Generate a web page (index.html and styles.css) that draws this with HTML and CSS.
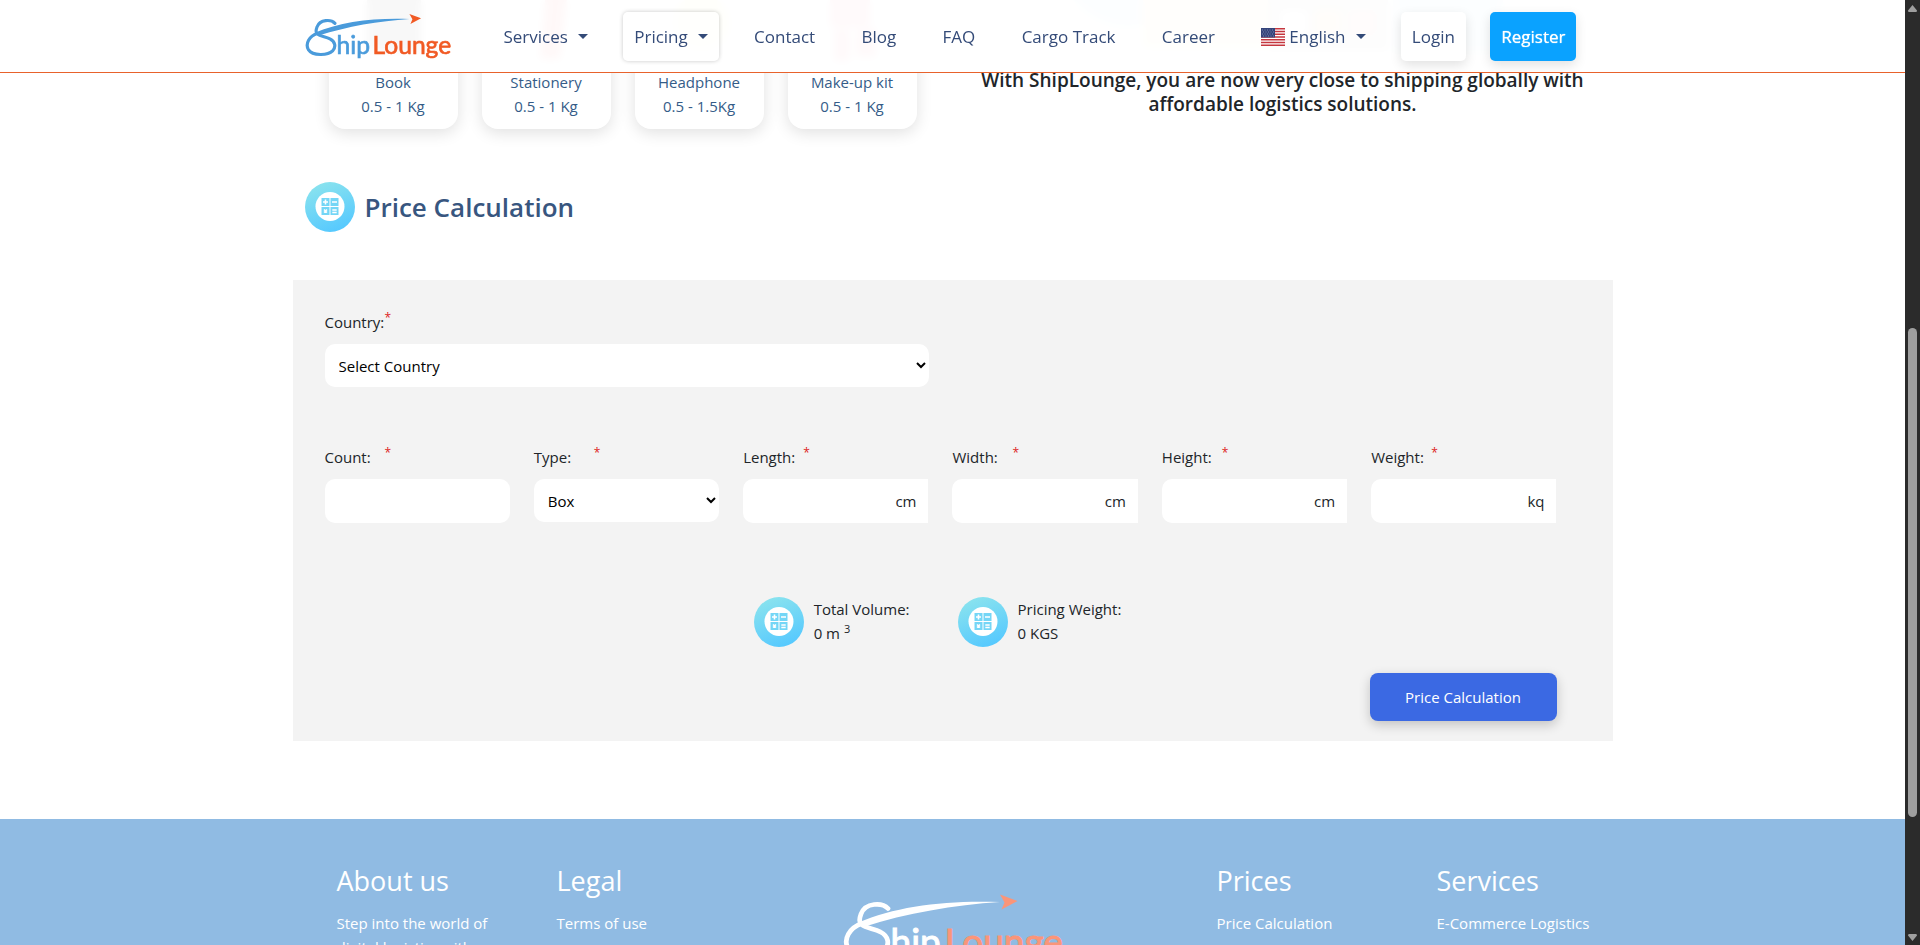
FILE: index.html
```html
<!DOCTYPE html>
<html lang="en">
<head>
<meta charset="utf-8">
<title>ShipLounge - Price Calculation</title>
<link rel="stylesheet" href="styles.css">
</head>
<body>
<svg width="0" height="0" class="defs" aria-hidden="true">
  <defs>
    <linearGradient id="sky" x1="0.3" y1="0" x2="0.7" y2="1"><stop offset="0" stop-color="#8ae3ee"/><stop offset="1" stop-color="#54c8ff"/></linearGradient>
    <symbol id="calc" viewBox="0 0 50 50">
      <circle cx="25" cy="25" r="25" fill="url(#sky)"/>
      <circle cx="25" cy="24.500" r="14.500" fill="#fff"/>
      <path fill="#74d6f6" d="M16.500 16h8v8h-8zM25.500 16h8v8h-8zM16.500 25h8v8h-8zM25.500 25h8v8h-8z"/>
      <path stroke="#fff" stroke-width="1.600" fill="none" d="M18 20h5M20.500 17.500v5M27 20h5M19 27.500l3 3M22 27.500l-3 3M27.300 28h4.400M27.300 30.500h4.400"/>
    </symbol>
    <symbol id="logo" viewBox="43 36 448 142">
      <g class="logo-ship">
        <path fill="none" stroke="currentColor" stroke-width="9.500" stroke-linecap="round" stroke-linejoin="round" d="M133 67C122 55 88 54 79 78C76 86 75 95 80 99C90 107 106 107 118 114C134 122 137 138 126 150C112 164 66 166 53 146C43 128 56 106 80 97"/>
        <path fill="currentColor" d="M74 95C150 62 250 50 357 54C265 60 170 76 84 104Z"/>
      </g>
      <path class="logo-lounge" fill="currentColor" d="M357 39L392 52L360 69L366 55Z"/>
      <text class="logo-ship logo-word" x="138" y="159">hip</text>
      <text class="logo-lounge logo-word" x="246" y="159">Lounge</text>
    </symbol>
  </defs>
</svg>
<div class="window">
  <div class="viewport">
    <header class="header">
      <div class="container header-row">
        <a class="brand" href="#" aria-label="ShipLounge"><svg class="logo"><use href="#logo"/></svg></a>
        <nav class="nav">
          <a class="caret" href="#">Services</a>
          <a class="caret active" href="#">Pricing</a>
          <a href="#">Contact</a>
          <a href="#">Blog</a>
          <a href="#">FAQ</a>
          <a href="#">Cargo Track</a>
          <a href="#">Career</a>
          <a class="caret" href="#"><svg class="flag" viewBox="0 0 24 18"><path fill="#fff" d="M0 0h24v18H0z"/><path stroke="#c5373f" stroke-width="1.400" d="M0 .7h24M0 3.450h24M0 6.200h24M0 8.950h24M0 11.700h24M0 14.450h24M0 17.200h24"/><path fill="#35447a" d="M0 0h14v9.500H0z"/><path stroke="#8f9bc0" stroke-width=".8" stroke-dasharray="1 1.500" d="M1 2h12M2 4h11M1 6h12M2 8h11"/></svg>English</a>
          <a class="login" href="#">Login</a>
          <a class="register" href="#">Register</a>
        </nav>
      </div>
    </header>
    <main>
      <section class="container intro">
        <div class="products">
          <article class="product"><svg viewBox="0 0 80 90"><rect x="14" y="20" width="54" height="56" rx="6" fill="#999"/></svg><span>Book</span><span>0.5 - 1 Kg</span></article>
          <article class="product"><svg viewBox="0 0 80 90"><path fill="#f8a0a0" d="M34 84l6-70h22l-8 70z"/></svg><span>Stationery</span><span>0.5 - 1 Kg</span></article>
          <article class="product"><svg viewBox="0 0 80 90"><circle cx="42" cy="48" r="28" fill="#fff3c4"/></svg><span>Headphone</span><span>0.5 - 1.5Kg</span></article>
          <article class="product"><svg viewBox="0 0 80 90"><path fill="#f7b0bd" d="M18 10h40v42H18zM22 54h16v32H22zM44 54h20v28H44z"/></svg><span>Make-up kit</span><span>0.5 - 1 Kg</span></article>
        </div>
        <div class="pitch">
          <svg class="scene" viewBox="0 0 480 115"><path fill="#d5edf7" d="M10 20h100v50q-60 20-100-50zM350 30h110v70H350z"/><path fill="#fff0cc" d="M100 20h130v75H100z"/><path fill="#dadada" d="M225 20h120v78H225z"/><path fill="#fff" d="M238 58h26v24h-26z"/><path fill="#ffe3b8" d="M272 58h26v24h-26z"/><path fill="#ffd3d3" d="M306 58h26v24h-26z"/></svg>
          <h5>With ShipLounge, you are now very close to shipping globally with affordable logistics solutions.</h5>
        </div>
      </section>
      <div class="container title"><svg class="badge"><use href="#calc"/></svg><h3>Price Calculation</h3></div>
      <form class="container panel">
        <div class="fields">
          <div class="field wide">
            <div class="label-row"><label for="country">Country:</label><sup>*</sup></div>
            <select id="country"><option>Select Country</option></select>
          </div>
        </div>
        <div class="fields sizes">
          <div class="field"><div class="label-row"><label for="count">Count:</label><sup>*</sup></div><input id="count" type="text"></div>
          <div class="field"><div class="label-row"><label for="type">Type:</label><sup>*</sup></div><select id="type"><option>Box</option></select></div>
          <div class="field"><div class="label-row"><label for="length">Length:</label><sup>*</sup></div><div class="unit"><input id="length" type="text"><span>cm</span></div></div>
          <div class="field"><div class="label-row"><label for="width">Width:</label><sup>*</sup></div><div class="unit"><input id="width" type="text"><span>cm</span></div></div>
          <div class="field"><div class="label-row"><label for="height">Height:</label><sup>*</sup></div><div class="unit"><input id="height" type="text"><span>cm</span></div></div>
          <div class="field"><div class="label-row"><label for="weight">Weight:</label><sup>*</sup></div><div class="unit"><input id="weight" type="text"><span>kq</span></div></div>
        </div>
        <div class="totals">
          <div class="total"><svg class="badge"><use href="#calc"/></svg><div>Total Volume:<br>0 m <sup>3</sup></div></div>
          <div class="total"><svg class="badge"><use href="#calc"/></svg><div>Pricing Weight:<br>0 KGS</div></div>
        </div>
        <button class="submit" type="button">Price Calculation</button>
      </form>
    </main>
    <footer class="footer">
      <div class="container footer-grid">
        <div class="col"><h3>About us</h3><p>Step into the world of digital logistics with</p></div>
        <div class="col"><h3>Legal</h3><a href="#">Terms of use</a></div>
        <div class="footer-brand"><svg class="logo"><use href="#logo"/></svg></div>
        <div class="col"><h3>Prices</h3><a href="#">Price Calculation</a></div>
        <div class="col"><h3>Services</h3><a href="#">E-Commerce Logistics</a></div>
      </div>
    </footer>
  </div>
  <div class="scrollbar" aria-hidden="true">
    <svg viewBox="0 0 9 7"><path d="M4.500 0L9 5.500Q9 7 8 7H1Q0 7 0 5.500Z"/></svg>
    <div class="track"><div class="thumb"></div></div>
    <svg viewBox="0 0 9 7"><path d="M4.500 7L9 1.500Q9 0 8 0H1Q0 0 0 1.500Z"/></svg>
  </div>
</div>
</body>
</html>
```

FILE: styles.css
```css
* { box-sizing: border-box; }
body {
  margin: 0;
  overflow: hidden;
  font: 15px/24px "Segoe UI", "Open Sans", "Noto Sans", sans-serif;
  color: #212529;
  background: #fff;
}
h3, h5, p { margin: 0; }
a { color: inherit; text-decoration: none; }
.defs { position: absolute; }

.window { display: grid; grid-template-columns: 1fr 15px; height: 100vh; }
.viewport { position: relative; overflow: hidden; min-width: 0; }
.container { width: 100%; max-width: 1320px; margin: 0 auto; }

.header {
  position: absolute;
  top: 0;
  left: 0;
  right: 0;
  z-index: 2;
  background: rgba(255, 255, 255, 0.93);
  backdrop-filter: blur(4px);
  border-bottom: 1px solid #e8622c;
}
.header-row { display: flex; align-items: center; padding: 12px 36px 11px 12px; }
.brand { display: flex; width: 149px; }
.logo { --ship: #4a9bdb; --lounge: #f15a24; width: 100%; aspect-ratio: 448 / 142; }
.logo-ship { color: var(--ship); }
.logo-lounge { color: var(--lounge); }
.logo-word { font: 74px Lato, sans-serif; fill: currentColor; stroke: currentColor; stroke-width: 2px; }
.nav {
  flex: 1;
  margin-left: 39px;
  display: flex;
  justify-content: space-between;
  font-size: 17px;
  line-height: 25px;
  color: #344b78;
}
.nav a { display: flex; align-items: center; padding: 12px 11px; border-radius: 5px; }
.caret::after {
  content: "";
  margin-left: 10px;
  border-top: 5px solid currentColor;
  border-left: 5px solid transparent;
  border-right: 5px solid transparent;
}
.nav .active { background: rgba(255, 255, 255, 0.5); box-shadow: 0 0 4px rgba(0, 0, 0, 0.22); }
.nav .login { background: #fff; box-shadow: 0 4px 12px rgba(0, 0, 0, 0.12); }
.nav .register { background: #0aa2ff; color: #fff; text-shadow: 0 0 1px #fff; box-shadow: 0 4px 12px rgba(0, 0, 0, 0.12); }
.flag { width: 24px; height: 18px; margin-right: 4px; }

.intro { display: grid; grid-template-columns: 1fr 1fr; margin-top: -48px; }
.products { display: grid; grid-template-columns: repeat(4, 129px); gap: 24px; padding-left: 36px; }
.product {
  display: flex;
  flex-direction: column;
  align-items: center;
  padding: 18px 0 11px;
  border-radius: 16px;
  background: #fff;
  color: #355c88;
  box-shadow: 0 4px 16px rgba(0, 0, 0, 0.12);
}
.product svg { width: 80px; height: 100px; }
.pitch { display: flex; flex-direction: column; align-items: center; padding: 0 24px; text-align: center; }
.scene { width: 480px; height: 116px; }
h5 { font-size: 19px; line-height: 24px; font-weight: 600; }

.title { display: flex; align-items: center; gap: 10px; padding: 53px 12px 48px; }
.title h3 { font-size: 26px; line-height: 34px; font-weight: 600; color: #38567f; }
.badge { width: 50px; height: 50px; flex: none; }

.panel { display: flex; flex-direction: column; padding: 32px 56px 20px 32px; background: #f3f3f3; }
.fields { display: grid; grid-template-columns: repeat(6, 1fr); gap: 24px; }
.wide { grid-column: span 3; }
.sizes { margin-top: 60px; }
.label-row { display: flex; height: 32px; line-height: 20px; }
.label-row label { width: 60px; white-space: nowrap; }
.label-row sup { font-size: 12px; line-height: 12px; color: #d22; }
.field { display: flex; flex-direction: column; }
select, input {
  width: 100%;
  border: 0;
  border-radius: 10px;
  background: #fff;
  font: inherit;
  color: #000;
}
select { height: 43px; padding: 0 0 0 10px; }
input { height: 44px; padding: 0 12px; }
.unit { display: flex; align-items: center; height: 44px; background: #fff; border-radius: 10px 0 0 10px; }
.unit input { min-width: 0; flex: 1; background: none; }
.unit span { padding-right: 12px; }
.totals { display: flex; justify-content: center; gap: 48px; padding: 74px 6px 24px 0; }
.total { display: flex; gap: 10px; min-height: 52px; }
.total sup { font-size: 11px; line-height: 0; }
.submit {
  align-self: flex-end;
  width: 187px;
  height: 48px;
  border: 0;
  border-radius: 8px;
  background: #3b69e3;
  color: #fff;
  font: inherit;
  box-shadow: 0 4px 12px rgba(0, 0, 0, 0.2);
}

.footer { margin-top: 78px; padding: 44px 0; background: #90bbe3; color: #fff; }
.footer-grid { display: grid; grid-template-columns: repeat(6, 1fr); }
.col { padding-left: 44px; white-space: nowrap; }
.col p { white-space: normal; }
.col h3 { margin-bottom: 12px; font-size: 27px; line-height: 36px; font-weight: 400; }
.footer-brand { grid-column: span 2; padding: 30px 0 0 110px; }
.footer-brand .logo { --ship: #fff; --lounge: #fa9579; width: 224px; }

.scrollbar { display: flex; flex-direction: column; align-items: center; padding: 5px 0 4px; background: #2b2b2b; }
.scrollbar svg { width: 9px; height: 7px; fill: #9f9f9f; }
.track { flex: 1; display: grid; grid-template-rows: 316fr 489fr 117fr; }
.thumb { grid-row: 2; width: 9px; border-radius: 5px; background: #9f9f9f; }
```
